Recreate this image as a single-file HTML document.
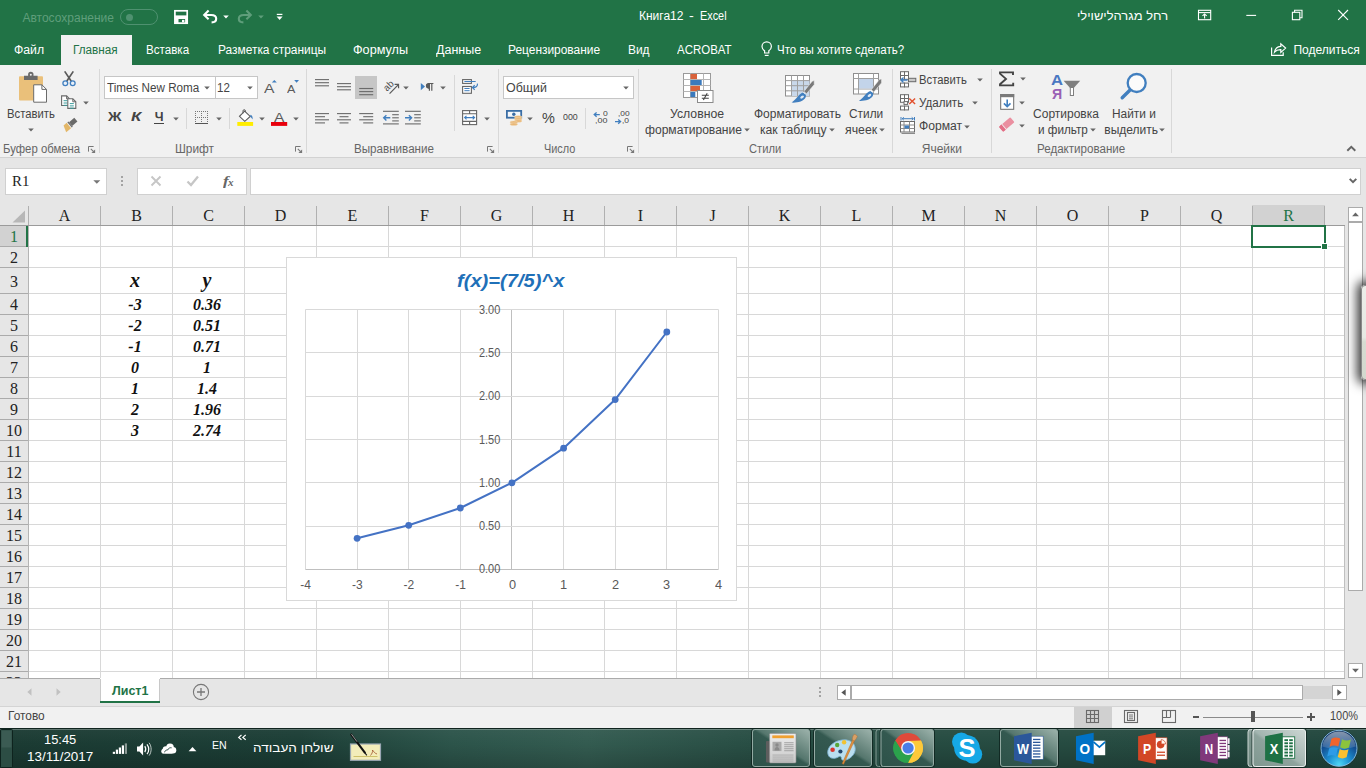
<!DOCTYPE html>
<html><head><meta charset="utf-8"><title>Excel</title>
<style>
html,body{margin:0;padding:0;background:#fff;}
body{width:1366px;height:768px;position:relative;overflow:hidden;}
.b{position:absolute;display:block;}
.t{position:absolute;white-space:nowrap;transform-origin:0 50%;display:block;}
.s{font-family:"Liberation Sans","DejaVu Sans",sans-serif;}
.r{font-family:"Liberation Serif","DejaVu Serif",serif;}
</style></head><body>
<div class="b" style="left:0px;top:0px;width:1366px;height:65px;background:#217346;"></div>
<div class="b" style="left:0px;top:65px;width:1366px;height:92px;background:#f1f1f1;"></div>
<div class="b" style="left:0px;top:157px;width:1366px;height:1px;background:#d2d2d2;"></div>
<div class="b" style="left:0px;top:158px;width:1366px;height:48px;background:#e6e6e6;"></div>
<span class="t s" style="left:22.46px;top:9.84px;font-size:12px;line-height:16px;color:#5f9e7b;">Автосохранение</span>
<div class="b" style="left:120px;top:9px;width:38px;height:16px;border:1px solid #4f9170;box-sizing:border-box;border-radius:8px;"></div>
<div class="b" style="left:125.5px;top:13.5px;width:7px;height:7px;background:#4f9170;border-radius:50%;"></div>
<span class="t s" style="left:638.96px;top:7.84px;font-size:12px;line-height:16px;color:#fff;">Книга12</span>
<span class="t s" style="left:689.46px;top:7.84px;font-size:12px;line-height:16px;color:#fff;transform:scaleX(1.1960);">-</span>
<span class="t s" style="left:699.86px;top:7.84px;font-size:12px;line-height:16px;color:#fff;transform:scaleX(0.9058);">Excel</span>
<span class="t s" style="left:1077.46px;top:7.84px;font-size:12px;line-height:16px;color:#fff;transform:scaleX(1.0770);">רחל מגרהלישוילי</span>
<div class="b" style="left:61px;top:35px;width:71px;height:30px;background:#f1f1f1;"></div>
<span class="t s" style="left:14.46px;top:41.84px;font-size:12px;line-height:16px;color:#fff;transform:scaleX(1.0196);">Файл</span>
<span class="t s" style="left:73.46px;top:41.84px;font-size:12px;line-height:16px;color:#217346;transform:scaleX(0.9760);">Главная</span>
<span class="t s" style="left:146.46px;top:41.84px;font-size:12px;line-height:16px;color:#fff;transform:scaleX(0.9659);">Вставка</span>
<span class="t s" style="left:217.96px;top:41.84px;font-size:12px;line-height:16px;color:#fff;transform:scaleX(0.9928);">Разметка страницы</span>
<span class="t s" style="left:353.46px;top:41.84px;font-size:12px;line-height:16px;color:#fff;transform:scaleX(1.0548);">Формулы</span>
<span class="t s" style="left:435.96px;top:41.84px;font-size:12px;line-height:16px;color:#fff;transform:scaleX(1.0398);">Данные</span>
<span class="t s" style="left:508.46px;top:41.84px;font-size:12px;line-height:16px;color:#fff;transform:scaleX(0.9937);">Рецензирование</span>
<span class="t s" style="left:628.46px;top:41.84px;font-size:12px;line-height:16px;color:#fff;transform:scaleX(0.9940);">Вид</span>
<span class="t s" style="left:677.46px;top:41.84px;font-size:12px;line-height:16px;color:#fff;transform:scaleX(0.9555);">ACROBAT</span>
<span class="t s" style="left:777.46px;top:41.84px;font-size:12px;line-height:16px;color:#fff;transform:scaleX(0.9579);">Что вы хотите сделать?</span>
<span class="t s" style="left:1293.46px;top:41.84px;font-size:12px;line-height:16px;color:#fff;">Поделиться</span>
<span class="t s" style="left:2.96px;top:140.84px;font-size:12px;line-height:16px;color:#666666;transform:scaleX(0.9465);">Буфер обмена</span>
<span class="t s" style="left:175.16px;top:140.84px;font-size:12px;line-height:16px;color:#666666;transform:scaleX(0.9873);">Шрифт</span>
<span class="t s" style="left:354.26px;top:140.84px;font-size:12px;line-height:16px;color:#666666;transform:scaleX(0.9683);">Выравнивание</span>
<span class="t s" style="left:544.16px;top:140.84px;font-size:12px;line-height:16px;color:#666666;transform:scaleX(0.9092);">Число</span>
<span class="t s" style="left:748.96px;top:140.84px;font-size:12px;line-height:16px;color:#666666;transform:scaleX(0.9308);">Стили</span>
<span class="t s" style="left:921.76px;top:140.84px;font-size:12px;line-height:16px;color:#666666;">Ячейки</span>
<span class="t s" style="left:1037.06px;top:140.84px;font-size:12px;line-height:16px;color:#666666;transform:scaleX(0.9646);">Редактирование</span>
<div class="b" style="left:99px;top:69px;width:1px;height:84px;background:#d8d8d8;"></div>
<div class="b" style="left:306px;top:69px;width:1px;height:84px;background:#d8d8d8;"></div>
<div class="b" style="left:498px;top:69px;width:1px;height:84px;background:#d8d8d8;"></div>
<div class="b" style="left:638px;top:69px;width:1px;height:84px;background:#d8d8d8;"></div>
<div class="b" style="left:892px;top:69px;width:1px;height:84px;background:#d8d8d8;"></div>
<div class="b" style="left:991px;top:69px;width:1px;height:84px;background:#d8d8d8;"></div>
<div class="b" style="left:1171px;top:69px;width:1px;height:84px;background:#d8d8d8;"></div>
<div class="b" style="left:454px;top:75px;width:1px;height:56px;background:#d8d8d8;"></div>
<div class="b" style="left:186px;top:108px;width:1px;height:21px;background:#d8d8d8;"></div>
<div class="b" style="left:229px;top:108px;width:1px;height:21px;background:#d8d8d8;"></div>
<div class="b" style="left:585px;top:108px;width:1px;height:21px;background:#d8d8d8;"></div>
<span class="t s" style="left:6.96px;top:105.84px;font-size:12px;line-height:16px;color:#444444;transform:scaleX(0.9413);">Вставить</span>
<span class="t s" style="left:670.46px;top:105.84px;font-size:12px;line-height:16px;color:#444444;transform:scaleX(1.0207);">Условное</span>
<span class="t s" style="left:644.86px;top:121.84px;font-size:12px;line-height:16px;color:#444444;transform:scaleX(1.0066);">форматирование</span>
<span class="t s" style="left:753.96px;top:105.84px;font-size:12px;line-height:16px;color:#444444;">Форматировать</span>
<span class="t s" style="left:760.46px;top:121.84px;font-size:12px;line-height:16px;color:#444444;transform:scaleX(1.0146);">как таблицу</span>
<span class="t s" style="left:848.96px;top:105.84px;font-size:12px;line-height:16px;color:#444444;transform:scaleX(0.9887);">Стили</span>
<span class="t s" style="left:845.46px;top:121.84px;font-size:12px;line-height:16px;color:#444444;transform:scaleX(1.0233);">ячеек</span>
<span class="t s" style="left:918.96px;top:71.84px;font-size:12px;line-height:16px;color:#444444;transform:scaleX(0.9393);">Вставить</span>
<span class="t s" style="left:918.96px;top:94.84px;font-size:12px;line-height:16px;color:#444444;transform:scaleX(0.9643);">Удалить</span>
<span class="t s" style="left:918.96px;top:117.84px;font-size:12px;line-height:16px;color:#444444;transform:scaleX(1.0129);">Формат</span>
<span class="t s" style="left:1033.06px;top:105.84px;font-size:12px;line-height:16px;color:#444444;">Сортировка</span>
<span class="t s" style="left:1037.96px;top:121.84px;font-size:12px;line-height:16px;color:#444444;transform:scaleX(0.9761);">и фильтр</span>
<span class="t s" style="left:1112.16px;top:105.84px;font-size:12px;line-height:16px;color:#444444;transform:scaleX(0.9910);">Найти и</span>
<span class="t s" style="left:1104.26px;top:121.84px;font-size:12px;line-height:16px;color:#444444;">выделить</span>
<div class="b" style="left:104px;top:76px;width:112px;height:23px;background:#fff;border:1px solid #c6c6c6;box-sizing:border-box;"></div>
<div class="b" style="left:215px;top:76px;width:43px;height:23px;background:#fff;border:1px solid #c6c6c6;box-sizing:border-box;"></div>
<span class="t s" style="left:107.24px;top:80.07px;font-size:12.5px;line-height:16px;color:#444444;transform:scaleX(0.9339);">Times New Roma</span>
<span class="t s" style="left:217.24px;top:80.07px;font-size:12.5px;line-height:16px;color:#444444;transform:scaleX(0.9224);">12</span>
<div class="b" style="left:503px;top:76px;width:131px;height:23px;background:#fff;border:1px solid #c6c6c6;box-sizing:border-box;"></div>
<span class="t s" style="left:506.04px;top:79.97px;font-size:12.5px;line-height:16px;color:#444444;transform:scaleX(0.9950);">Общий</span>
<div class="b" style="left:355px;top:76px;width:22px;height:23px;background:#c6c6c6;"></div>
<span class="t s" style="left:108.24px;top:109.37px;font-size:12.5px;line-height:16px;color:#444444;font-weight:bold;transform:scaleX(1.1971);">Ж</span>
<span class="t s" style="left:130.66px;top:109.37px;font-size:12.5px;line-height:16px;color:#444444;font-weight:bold;font-style:italic;transform:scaleX(1.3371);">К</span>
<span class="t s" style="left:154.74px;top:109.37px;font-size:12.5px;line-height:16px;color:#444444;font-weight:bold;">Ч</span>
<div class="b" style="left:154px;top:123px;width:10px;height:1.1px;background:#444444;"></div>
<span class="t s" style="left:542.12px;top:108.20px;font-size:15px;line-height:20px;color:#444444;transform:scaleX(0.9635);">%</span>
<span class="t s" style="left:562.58px;top:111.18px;font-size:9.3px;line-height:12px;color:#444444;transform:scaleX(0.9497);">000</span>
<span class="t s" style="left:263.92px;top:79.80px;font-size:13px;line-height:17px;color:#5a5a5a;transform:scaleX(1.2074);">A</span>
<span class="t s" style="left:286.83px;top:82.16px;font-size:10.5px;line-height:14px;color:#5a5a5a;transform:scaleX(1.1915);">A</span>
<span class="t s" style="left:273.92px;top:108.50px;font-size:13px;line-height:17px;color:#5a5a5a;transform:scaleX(1.1959);">A</span>
<span class="t s" style="left:1050.75px;top:70.78px;font-size:14.5px;line-height:19px;color:#4a78c2;font-weight:bold;transform:scaleX(1.1464);">А</span>
<span class="t s" style="left:1051.55px;top:84.88px;font-size:14.5px;line-height:19px;color:#9a5fb5;font-weight:bold;transform:scaleX(0.9792);">Я</span>
<span class="t s" style="left:602.67px;top:108.84px;font-size:7.4px;line-height:10px;color:#444;transform:scaleX(1.1580);">0</span>
<span class="t s" style="left:594.97px;top:116.44px;font-size:7.4px;line-height:10px;color:#444;transform:scaleX(1.2118);">,00</span>
<span class="t s" style="left:617.57px;top:108.84px;font-size:7.4px;line-height:10px;color:#444;transform:scaleX(1.1340);">,00</span>
<span class="t s" style="left:622.17px;top:116.44px;font-size:7.4px;line-height:10px;color:#444;transform:scaleX(1.1449);">,0</span>
<svg class="b" style="left:28.3px;top:127.5px;" width="6" height="4" viewBox="0 0 6 4"><path d="M0.2 0.5h5.6L3 3.6z" fill="#666"/></svg>
<svg class="b" style="left:82.7px;top:100.5px;" width="6" height="4" viewBox="0 0 6 4"><path d="M0.2 0.5h5.6L3 3.6z" fill="#666"/></svg>
<svg class="b" style="left:204px;top:85.5px;" width="6" height="4" viewBox="0 0 6 4"><path d="M0.2 0.5h5.6L3 3.6z" fill="#666"/></svg>
<svg class="b" style="left:247.3px;top:85.5px;" width="6" height="4" viewBox="0 0 6 4"><path d="M0.2 0.5h5.6L3 3.6z" fill="#666"/></svg>
<svg class="b" style="left:172.5px;top:116.5px;" width="6" height="4" viewBox="0 0 6 4"><path d="M0.2 0.5h5.6L3 3.6z" fill="#666"/></svg>
<svg class="b" style="left:215.5px;top:116.5px;" width="6" height="4" viewBox="0 0 6 4"><path d="M0.2 0.5h5.6L3 3.6z" fill="#666"/></svg>
<svg class="b" style="left:258.5px;top:116.5px;" width="6" height="4" viewBox="0 0 6 4"><path d="M0.2 0.5h5.6L3 3.6z" fill="#666"/></svg>
<svg class="b" style="left:292.5px;top:116.5px;" width="6" height="4" viewBox="0 0 6 4"><path d="M0.2 0.5h5.6L3 3.6z" fill="#666"/></svg>
<svg class="b" style="left:402.8px;top:85.5px;" width="6" height="4" viewBox="0 0 6 4"><path d="M0.2 0.5h5.6L3 3.6z" fill="#666"/></svg>
<svg class="b" style="left:440.3px;top:85.5px;" width="6" height="4" viewBox="0 0 6 4"><path d="M0.2 0.5h5.6L3 3.6z" fill="#666"/></svg>
<svg class="b" style="left:483.5px;top:116.5px;" width="6" height="4" viewBox="0 0 6 4"><path d="M0.2 0.5h5.6L3 3.6z" fill="#666"/></svg>
<svg class="b" style="left:623.3px;top:85.5px;" width="6" height="4" viewBox="0 0 6 4"><path d="M0.2 0.5h5.6L3 3.6z" fill="#666"/></svg>
<svg class="b" style="left:527.3px;top:116.5px;" width="6" height="4" viewBox="0 0 6 4"><path d="M0.2 0.5h5.6L3 3.6z" fill="#666"/></svg>
<svg class="b" style="left:743.5px;top:128px;" width="6" height="4" viewBox="0 0 6 4"><path d="M0.2 0.5h5.6L3 3.6z" fill="#666"/></svg>
<svg class="b" style="left:829.4px;top:128px;" width="6" height="4" viewBox="0 0 6 4"><path d="M0.2 0.5h5.6L3 3.6z" fill="#666"/></svg>
<svg class="b" style="left:879.1px;top:128px;" width="6" height="4" viewBox="0 0 6 4"><path d="M0.2 0.5h5.6L3 3.6z" fill="#666"/></svg>
<svg class="b" style="left:976.5px;top:78px;" width="6" height="4" viewBox="0 0 6 4"><path d="M0.2 0.5h5.6L3 3.6z" fill="#666"/></svg>
<svg class="b" style="left:972.3px;top:100.5px;" width="6" height="4" viewBox="0 0 6 4"><path d="M0.2 0.5h5.6L3 3.6z" fill="#666"/></svg>
<svg class="b" style="left:964px;top:124.5px;" width="6" height="4" viewBox="0 0 6 4"><path d="M0.2 0.5h5.6L3 3.6z" fill="#666"/></svg>
<svg class="b" style="left:1020.3px;top:77px;" width="6" height="4" viewBox="0 0 6 4"><path d="M0.2 0.5h5.6L3 3.6z" fill="#666"/></svg>
<svg class="b" style="left:1018.5px;top:100.5px;" width="6" height="4" viewBox="0 0 6 4"><path d="M0.2 0.5h5.6L3 3.6z" fill="#666"/></svg>
<svg class="b" style="left:1018.5px;top:123.5px;" width="6" height="4" viewBox="0 0 6 4"><path d="M0.2 0.5h5.6L3 3.6z" fill="#666"/></svg>
<svg class="b" style="left:1090.3px;top:128px;" width="6" height="4" viewBox="0 0 6 4"><path d="M0.2 0.5h5.6L3 3.6z" fill="#666"/></svg>
<svg class="b" style="left:1158.8px;top:128px;" width="6" height="4" viewBox="0 0 6 4"><path d="M0.2 0.5h5.6L3 3.6z" fill="#666"/></svg>
<svg class="b" style="left:222.9px;top:14.5px;" width="6" height="4" viewBox="0 0 6 4"><path d="M0.2 0.5h5.6L3 3.6z" fill="#fff"/></svg>
<svg class="b" style="left:257.6px;top:14.5px;" width="6" height="4" viewBox="0 0 6 4"><path d="M0.2 0.5h5.6L3 3.6z" fill="#5f9e7b"/></svg>
<svg class="b" style="left:88px;top:146px;" width="8" height="8" viewBox="0 0 8 8"><path d="M0.5 5.6V0.5H5.6" fill="none" stroke="#777" stroke-width="1"/><path d="M2.8 2.8L5.6 5.6" stroke="#777" stroke-width="1.1"/><path d="M7.1 3.4V7.1H3.4z" fill="#777"/></svg>
<svg class="b" style="left:295px;top:146px;" width="8" height="8" viewBox="0 0 8 8"><path d="M0.5 5.6V0.5H5.6" fill="none" stroke="#777" stroke-width="1"/><path d="M2.8 2.8L5.6 5.6" stroke="#777" stroke-width="1.1"/><path d="M7.1 3.4V7.1H3.4z" fill="#777"/></svg>
<svg class="b" style="left:487px;top:146px;" width="8" height="8" viewBox="0 0 8 8"><path d="M0.5 5.6V0.5H5.6" fill="none" stroke="#777" stroke-width="1"/><path d="M2.8 2.8L5.6 5.6" stroke="#777" stroke-width="1.1"/><path d="M7.1 3.4V7.1H3.4z" fill="#777"/></svg>
<svg class="b" style="left:627px;top:146px;" width="8" height="8" viewBox="0 0 8 8"><path d="M0.5 5.6V0.5H5.6" fill="none" stroke="#777" stroke-width="1"/><path d="M2.8 2.8L5.6 5.6" stroke="#777" stroke-width="1.1"/><path d="M7.1 3.4V7.1H3.4z" fill="#777"/></svg>
<svg class="b" style="left:0;top:0" width="1366" height="160" viewBox="0 0 1366 160"><rect x="174.9" y="10.8" width="12.3" height="12.4" fill="none" stroke="#fff" stroke-width="1.7"/><rect x="175" y="15.4" width="12" height="7.6" fill="#fff"/><rect x="178.5" y="19" width="6.6" height="3.3" fill="#217346"/><rect x="182" y="19.9" width="2.4" height="2.4" fill="#fff"/><g transform="translate(203,0)" fill="none" stroke="#fff" stroke-width="2.1"><path d="M5.6 10.6L1.2 15.0L5.6 19.2"/><path d="M1.6 15H8.2C11.8 15 13.2 16.9 13.2 18.8C13.2 21 11.2 22.4 8.6 22.4"/></g><g transform="translate(252,0) scale(-1,1)" fill="none" stroke="#5f9e7b" stroke-width="2.1"><path d="M5.6 10.6L1.2 15.0L5.6 19.2"/><path d="M1.6 15H8.2C11.8 15 13.2 16.9 13.2 18.8C13.2 21 11.2 22.4 8.6 22.4"/></g><rect x="276.8" y="13.8" width="5.6" height="1.2" fill="#fff"/><path d="M276.6 16.6h6l-3 3.4z" fill="#fff"/><g fill="none" stroke="#fff" stroke-width="1.2"><path d="M764.600 53v-2.200c-1.700-1.200-2.600-2.500-2.600-4.300a4.700 4.700 0 0 1 9.400 0c0 1.800-.9 3.100-2.600 4.300v2.200z"/><path d="M764.800 55.400h3.800"/></g><g fill="none" stroke="#fff" stroke-width="1.2"><path d="M1271.6 47.5v7.8h11.6v-3"/><path d="M1274.5 52.2c.6-3.6 3-5.6 6.3-5.8v-2.6l4.8 4.3l-4.8 4.3v-2.7c-2.6-.1-4.6.6-6.3 2.5z"/></g><g fill="none" stroke="#fff" stroke-width="1.1"><rect x="1198.5" y="10.3" width="12.2" height="9.4"/><path d="M1198.5 12.6h12.2"/><path d="M1204.6 18.4v-4.4M1202.5 15.9l2.1-2l2.1 2"/></g><path d="M1246.3 15.4h9.8" stroke="#fff" stroke-width="1.1"/><g fill="none" stroke="#fff" stroke-width="1.1"><rect x="1292.4" y="12.3" width="7.4" height="7.4"/><path d="M1294.6 12.3v-2h7.4v7.4h-2.2"/></g><path d="M1338.2 10l9.8 9.8M1348 10l-9.8 9.8" stroke="#fff" stroke-width="1.1" fill="none"/><rect x="19" y="76.2" width="24" height="24.4" rx="1" fill="#eac07a"/><path d="M24 80v-4.300h4.100v-1.200a2.700 2.700 0 0 1 5.400 0v1.200h4.100v4.300z" fill="#6a6a6a"/><circle cx="30.800" cy="74.700" r="1" fill="#f1f1f1"/><path d="M33.7 84.8h8.2l4.6 4.6v12.8h-12.8z" fill="#fff" stroke="#6a6a6a" stroke-width="1"/><path d="M41.9 84.8v4.6h4.6" fill="none" stroke="#6a6a6a" stroke-width="1"/><path d="M64.700 71.400l6.600 9.800M73.300 71.400l-6.600 9.800" stroke="#5a5a5a" stroke-width="1.700" fill="none"/><circle cx="65.300" cy="83.200" r="2.400" fill="#e9f0f8" stroke="#417fbf" stroke-width="1.300"/><circle cx="72.700" cy="83.200" r="2.400" fill="#e9f0f8" stroke="#417fbf" stroke-width="1.300"/><path d="M61.6 95.9h5l3 3v6.6h-8z" fill="#fff" stroke="#6a6a6a" stroke-width="1.1"/><path d="M66.6 95.9v3h3" fill="none" stroke="#6a6a6a" stroke-width="1"/><path d="M63.6 100.7h4" stroke="#3a9c9c" stroke-width="1"/><path d="M63.6 103.0h4" stroke="#3a9c9c" stroke-width="1"/><path d="M63.6 105.3h4" stroke="#3a9c9c" stroke-width="1"/><path d="M67.8 98.8h5l3 3v6.6h-8z" fill="#fff" stroke="#6a6a6a" stroke-width="1.1"/><path d="M72.8 98.8v3h3" fill="none" stroke="#6a6a6a" stroke-width="1"/><path d="M69.8 103.6h4" stroke="#3a9c9c" stroke-width="1"/><path d="M69.8 105.89999999999999h4" stroke="#3a9c9c" stroke-width="1"/><path d="M69.8 108.19999999999999h4" stroke="#3a9c9c" stroke-width="1"/><g transform="translate(69.700,124.800) rotate(-40) scale(0.780)"><rect x="1.5" y="-3.1" width="8.8" height="6.2" fill="#6a6a6a"/><rect x="-0.3" y="-4.4" width="1.8" height="8.8" fill="#6a6a6a"/><path d="M-1.4 -4.4h-5.2l-3 8.8h8.2z" fill="#e3b768"/></g><path d="M271.8 82.6l2.5-2.7l2.5 2.7z" fill="#417fbf"/><path d="M294.2 80l2.4 2.7l2.4-2.7z" fill="#417fbf"/><rect x="195" y="111" width="1" height="1" fill="#777"/><rect x="195" y="117" width="1" height="1" fill="#777"/><rect x="197" y="111" width="1" height="1" fill="#777"/><rect x="197" y="117" width="1" height="1" fill="#777"/><rect x="199" y="111" width="1" height="1" fill="#777"/><rect x="199" y="117" width="1" height="1" fill="#777"/><rect x="201" y="111" width="1" height="1" fill="#777"/><rect x="201" y="117" width="1" height="1" fill="#777"/><rect x="203" y="111" width="1" height="1" fill="#777"/><rect x="203" y="117" width="1" height="1" fill="#777"/><rect x="205" y="111" width="1" height="1" fill="#777"/><rect x="205" y="117" width="1" height="1" fill="#777"/><rect x="207" y="111" width="1" height="1" fill="#777"/><rect x="207" y="117" width="1" height="1" fill="#777"/><rect x="195" y="111" width="1" height="1" fill="#777"/><rect x="201" y="111" width="1" height="1" fill="#777"/><rect x="207" y="111" width="1" height="1" fill="#777"/><rect x="195" y="113" width="1" height="1" fill="#777"/><rect x="201" y="113" width="1" height="1" fill="#777"/><rect x="207" y="113" width="1" height="1" fill="#777"/><rect x="195" y="115" width="1" height="1" fill="#777"/><rect x="201" y="115" width="1" height="1" fill="#777"/><rect x="207" y="115" width="1" height="1" fill="#777"/><rect x="195" y="117" width="1" height="1" fill="#777"/><rect x="201" y="117" width="1" height="1" fill="#777"/><rect x="207" y="117" width="1" height="1" fill="#777"/><rect x="195" y="119" width="1" height="1" fill="#777"/><rect x="201" y="119" width="1" height="1" fill="#777"/><rect x="207" y="119" width="1" height="1" fill="#777"/><rect x="195" y="121" width="1" height="1" fill="#777"/><rect x="201" y="121" width="1" height="1" fill="#777"/><rect x="207" y="121" width="1" height="1" fill="#777"/><rect x="195" y="123" width="13" height="1" fill="#555"/><rect x="237.3" y="122" width="15.8" height="3.9" fill="#ffed00"/><path d="M244.6 111.2l5.6 5.2l-5.4 4.9l-5.3-5z" fill="#fff" stroke="#5a5a5a" stroke-width="1.1"/><path d="M243 113.3v-2.4a1.2 1.2 0 0 1 2.4 0v1" fill="none" stroke="#5a5a5a" stroke-width="1"/><path d="M250.3 114.8c1.8.5 2.6 2.2 2.3 4.6c-1-.9-1.600-2.200-2.300-2.6z" fill="#417fbf"/><rect x="271" y="122" width="16.2" height="3.9" fill="#e8000d"/><rect x="315" y="79.05" width="14" height="1.1" fill="#6a6a6a"/><rect x="315" y="82.15" width="14" height="1.1" fill="#6a6a6a"/><rect x="315" y="85.25" width="14" height="1.1" fill="#6a6a6a"/><rect x="337" y="83.05" width="14" height="1.1" fill="#6a6a6a"/><rect x="337" y="86.15" width="14" height="1.1" fill="#6a6a6a"/><rect x="337" y="89.25" width="14" height="1.1" fill="#6a6a6a"/><rect x="359.2" y="87.95" width="14.0" height="1.1" fill="#6a6a6a"/><rect x="359.2" y="91.05" width="14.0" height="1.1" fill="#6a6a6a"/><rect x="359.2" y="94.15" width="14.0" height="1.1" fill="#6a6a6a"/><path d="M389.600 93.600l8.800-9" stroke="#5a5a5a" stroke-width="1.200"/><path d="M394.600 84.300l3.900.100l.1 3.900" fill="none" stroke="#5a5a5a" stroke-width="1.200"/><text transform="translate(388.400,85.700) rotate(-45)" text-anchor="middle" font-family="Liberation Sans, sans-serif" font-size="9.500" fill="#4a4a4a" y="3.200">ab</text><path d="M420.8 83v7.2l4.200-3.600z" fill="#417fbf"/><path d="M429.4 83.4v7.400M431.8 83.400v7.400M433.400 83.500h-5.200a2.400 2.400 0 0 0 0 4.600h1.200" fill="none" stroke="#5a5a5a" stroke-width="1.200"/><path d="M428.2 83.5a2.300 2.300 0 0 0 0 4.600h1.200v-4.600z" fill="#5a5a5a"/><rect x="315" y="113.05" width="14" height="1.1" fill="#6a6a6a"/><rect x="315" y="116.15" width="10" height="1.1" fill="#6a6a6a"/><rect x="315" y="119.25" width="14" height="1.1" fill="#6a6a6a"/><rect x="315" y="122.35000000000001" width="10" height="1.1" fill="#6a6a6a"/><rect x="337" y="113.05" width="14" height="1.1" fill="#6a6a6a"/><rect x="339.5" y="116.15" width="9.0" height="1.1" fill="#6a6a6a"/><rect x="337" y="119.25" width="14" height="1.1" fill="#6a6a6a"/><rect x="339.5" y="122.35000000000001" width="9.0" height="1.1" fill="#6a6a6a"/><rect x="359.2" y="113.05" width="14.0" height="1.1" fill="#6a6a6a"/><rect x="363.2" y="116.15" width="10.0" height="1.1" fill="#6a6a6a"/><rect x="359.2" y="119.25" width="14.0" height="1.1" fill="#6a6a6a"/><rect x="363.2" y="122.35000000000001" width="10.0" height="1.1" fill="#6a6a6a"/><rect x="383" y="110.75" width="15.800000000000011" height="1.1" fill="#6a6a6a"/><rect x="383" y="123.35000000000001" width="15.800000000000011" height="1.1" fill="#6a6a6a"/><rect x="392.2" y="114.15" width="6.600000000000023" height="1.1" fill="#6a6a6a"/><rect x="392.2" y="117.25" width="6.600000000000023" height="1.1" fill="#6a6a6a"/><rect x="392.2" y="120.35000000000001" width="6.600000000000023" height="1.1" fill="#6a6a6a"/><path d="M390.3 117.800h-6.500M386.4 115.200l-2.700 2.600l2.700 2.600" fill="none" stroke="#417fbf" stroke-width="1.400"/><rect x="405" y="110.75" width="15.800000000000011" height="1.1" fill="#6a6a6a"/><rect x="405" y="123.35000000000001" width="15.800000000000011" height="1.1" fill="#6a6a6a"/><rect x="414.2" y="114.15" width="6.600000000000023" height="1.1" fill="#6a6a6a"/><rect x="414.2" y="117.25" width="6.600000000000023" height="1.1" fill="#6a6a6a"/><rect x="414.2" y="120.35000000000001" width="6.600000000000023" height="1.1" fill="#6a6a6a"/><path d="M405 117.800h6.500M408.9 115.200l2.700 2.600l-2.700 2.600" fill="none" stroke="#417fbf" stroke-width="1.400"/><g fill="#fff" stroke="#666" stroke-width="1.100"><rect x="462.600" y="79.600" width="8.800" height="3.800"/><rect x="462.600" y="86.500" width="8.800" height="6.800"/></g><path d="M464.400 81.500h11.300M464.400 88.500h5.200M464.400 90.700h5.200" stroke="#417fbf" stroke-width="1" fill="none"/><path d="M477.400 83.700c.5 2.200-1.200 3.800-4.800 3.800M474.700 85.300l-2.300 2.200l2.300 2.200" fill="none" stroke="#417fbf" stroke-width="1.200"/><g fill="#fff" stroke="#666" stroke-width="1.100"><rect x="462.600" y="110.600" width="14" height="14"/><path d="M462.600 113.800h14M462.600 121.400h14M469.600 110.600v3.200M469.600 121.400v3.200"/></g><path d="M464.600 117.600h10M466.500 115.800l-1.900 1.800l1.900 1.800M472.700 115.800l1.900 1.800l-1.900 1.800" fill="none" stroke="#417fbf" stroke-width="1.100"/><rect x="506.900" y="110.900" width="14.300" height="6.800" fill="#f4f7fb" stroke="#3b6ea5" stroke-width="1.800"/><circle cx="513.800" cy="114.300" r="1.700" fill="#3b6ea5"/><ellipse cx="518.2" cy="117" rx="3.800" ry="1.300" fill="#e8b574" stroke="#f3dcb8" stroke-width="0.500"/><ellipse cx="518.2" cy="119" rx="3.800" ry="1.300" fill="#e8b574" stroke="#f3dcb8" stroke-width="0.500"/><ellipse cx="518.2" cy="121" rx="3.800" ry="1.300" fill="#e8b574" stroke="#f3dcb8" stroke-width="0.500"/><ellipse cx="513.8" cy="122.2" rx="3.800" ry="1.300" fill="#e8b574" stroke="#f3dcb8" stroke-width="0.500"/><ellipse cx="513.8" cy="124.2" rx="3.800" ry="1.300" fill="#e8b574" stroke="#f3dcb8" stroke-width="0.500"/><path d="M599.800 114.600h-5.600M596.600 112.400l-2.400 2.200l2.400 2.200" fill="none" stroke="#417fbf" stroke-width="1.300"/><path d="M615 121.600h5.600M618.200 119.400l2.400 2.200l-2.400 2.200" fill="none" stroke="#417fbf" stroke-width="1.300"/><rect x="683.500" y="73.500" width="27" height="24" fill="#fff" stroke="#9a9a9a" stroke-width="1"/><path d="M683.500 79.5h27" stroke="#b5b5b5" stroke-width="1"/><path d="M683.500 85.5h27" stroke="#b5b5b5" stroke-width="1"/><path d="M683.500 91.5h27" stroke="#b5b5b5" stroke-width="1"/><path d="M690.5 73.500v24" stroke="#b5b5b5" stroke-width="1"/><path d="M703.5 73.500v24" stroke="#b5b5b5" stroke-width="1"/><rect x="690.500" y="74" width="6.500" height="5" fill="#d9623b"/><rect x="690.500" y="80" width="11.200" height="5" fill="#3b7abd"/><rect x="690.500" y="86" width="9.500" height="5" fill="#d9623b"/><rect x="690.500" y="92" width="4.800" height="5" fill="#3b7abd"/><rect x="697.500" y="90.500" width="15.500" height="12" fill="#fff" stroke="#8a8a8a" stroke-width="1"/><path d="M701.800 95.200h7M701.800 98.200h7M707.200 93.300l-3.800 6.800" stroke="#444" stroke-width="1.100" fill="none"/><rect x="785.500" y="75.500" width="24" height="20.500" fill="#fff" stroke="#8f8f8f" stroke-width="1"/><rect x="791.500" y="80.500" width="18" height="15.500" fill="#c9d8ea"/><path d="M785.500 80.6h24" stroke="#9f9f9f" stroke-width="1"/><path d="M785.500 85.7h24" stroke="#9f9f9f" stroke-width="1"/><path d="M785.500 90.8h24" stroke="#9f9f9f" stroke-width="1"/><path d="M791.5 75.500v20.500" stroke="#9f9f9f" stroke-width="1"/><path d="M797.5 75.500v20.500" stroke="#9f9f9f" stroke-width="1"/><path d="M803.5 75.500v20.500" stroke="#9f9f9f" stroke-width="1"/><g transform="translate(804.8,92.8)"><path d="M-0.800 -1.400L7.400 -11.600L9.400 -12.200V-8.200L1.700 1z" fill="#7a7a7a" stroke="#f1f1f1" stroke-width="0.500"/><path d="M-1.600 -0.200C-5.800 0.700 -7.800 6.200 -13.200 9.800C-7.800 10.200 -1.300 8.700 0.800 4.700C1.500 2.700 1 1.500 0.200 1z" fill="#417fbf"/><ellipse cx="-2.700" cy="4.300" rx="2.100" ry="1.200" fill="#dfe9f5" transform="rotate(-35 -2.700 4.300)"/><path d="M-1.900 -0.700L0.700 1.300" stroke="#f1f1f1" stroke-width="0.900"/></g><rect x="853.500" y="73.500" width="25" height="20.500" fill="#fff" stroke="#8f8f8f" stroke-width="1"/><path d="M853.500 78.500h25M853.500 89h25M858.500 73.500v20.500M873.500 73.500v20.500" stroke="#9f9f9f" stroke-width="1" fill="none"/><rect x="859" y="79" width="14" height="9.500" fill="#c3d4ea"/><g transform="translate(872.1,91.1)"><path d="M-0.800 -1.400L7.400 -11.600L9.400 -12.200V-8.200L1.700 1z" fill="#7a7a7a" stroke="#f1f1f1" stroke-width="0.500"/><path d="M-1.600 -0.200C-5.800 0.700 -7.800 6.200 -13.200 9.800C-7.800 10.200 -1.300 8.700 0.800 4.700C1.500 2.700 1 1.500 0.200 1z" fill="#417fbf"/><ellipse cx="-2.700" cy="4.300" rx="2.100" ry="1.200" fill="#dfe9f5" transform="rotate(-35 -2.700 4.300)"/><path d="M-1.900 -0.700L0.700 1.300" stroke="#f1f1f1" stroke-width="0.900"/></g><rect x="900.5" y="71.7" width="4" height="3.800" fill="#fff" stroke="#6a6a6a" stroke-width="1"/><rect x="904.5" y="71.7" width="4" height="3.800" fill="#fff" stroke="#6a6a6a" stroke-width="1"/><rect x="900.5" y="75.5" width="4" height="3.800" fill="#fff" stroke="#6a6a6a" stroke-width="1"/><rect x="904.5" y="75.5" width="4" height="3.800" fill="#fff" stroke="#6a6a6a" stroke-width="1"/><rect x="900.5" y="83.1" width="4" height="3.800" fill="#fff" stroke="#6a6a6a" stroke-width="1"/><rect x="904.5" y="83.1" width="4" height="3.800" fill="#fff" stroke="#6a6a6a" stroke-width="1"/><rect x="908.500" y="78.300" width="7.300" height="3.400" fill="#c8c8c8" stroke="#6a6a6a" stroke-width="1"/><path d="M907.500 80h-6.500M903.500 77.600l-2.600 2.400l2.600 2.400" fill="none" stroke="#417fbf" stroke-width="1.300"/><rect x="900.5" y="94.7" width="4" height="3.800" fill="#fff" stroke="#6a6a6a" stroke-width="1"/><rect x="904.5" y="94.7" width="4" height="3.800" fill="#fff" stroke="#6a6a6a" stroke-width="1"/><rect x="900.5" y="98.5" width="4" height="3.800" fill="#fff" stroke="#6a6a6a" stroke-width="1"/><rect x="904.5" y="98.5" width="4" height="3.800" fill="#fff" stroke="#6a6a6a" stroke-width="1"/><rect x="900.5" y="106.1" width="4" height="3.800" fill="#fff" stroke="#6a6a6a" stroke-width="1"/><rect x="904.5" y="106.1" width="4" height="3.800" fill="#fff" stroke="#6a6a6a" stroke-width="1"/><rect x="904" y="101.600" width="3.600" height="2.800" fill="#fff" stroke="#6a6a6a" stroke-width="1"/><path d="M909.300 98.500l5.800 5.600M915.100 98.500l-5.800 5.600" stroke="#e2502e" stroke-width="1.400" fill="none"/><rect x="900.500" y="121.500" width="14" height="10.500" fill="#fff" stroke="#6a6a6a" stroke-width="1"/><path d="M900.500 125h14M900.500 128.500h14M904 121.500v10.500M909.500 121.500v10.500" stroke="#8a8a8a" stroke-width="1" fill="none"/><rect x="904.500" y="125.500" width="4.500" height="3" fill="#417fbf"/><path d="M901 117v3.500M914.500 117v3.500M902 118.700h11.500M903.800 117.300l-1.600 1.400l1.600 1.400M911.700 117.300l1.600 1.400l-1.600 1.400" fill="none" stroke="#417fbf" stroke-width="1"/><path d="M901.500 133.500h13.500" stroke="#8a8a8a" stroke-width="1"/><path d="M1013 74.900v-2.500h-13v1.200l6 5.300l-6 5.300v1.200h13.200v-2.700" fill="none" stroke="#444" stroke-width="1.900"/><rect x="1000.700" y="94.500" width="13" height="14.800" fill="#fff" stroke="#6a6a6a" stroke-width="1"/><rect x="1000.200" y="94" width="14" height="3.200" fill="#7a7a7a"/><path d="M1007.200 99.500v7M1003.900 103.400l3.300 3.200l3.300-3.200" fill="none" stroke="#417fbf" stroke-width="1.600"/><g transform="translate(1006.700,124.500) rotate(-40)"><rect x="-7.500" y="-3.300" width="15" height="6.600" rx="1" fill="#ea8fa0"/><rect x="-7.500" y="-3.300" width="4" height="6.600" rx="1" fill="#e36f86"/><rect x="-4" y="-3.300" width="0.900" height="6.600" fill="#f1f1f1"/></g><path d="M1063.600 80.800h16.600l-6.500 7.200h-3.600z" fill="#7f7f7f"/><rect x="1070.300" y="87.500" width="3.200" height="8" fill="#fff" stroke="#7f7f7f" stroke-width="1"/><circle cx="1136.700" cy="83" r="9" fill="#fbfbfb" stroke="#417fbf" stroke-width="2.300"/><path d="M1129.800 90.300l-7.600 7.400" stroke="#417fbf" stroke-width="3.400" stroke-linecap="round"/><path d="M1347.300 150.800l4-3.900l4 3.900" fill="none" stroke="#666" stroke-width="2"/></svg>
<div class="b" style="left:5px;top:168px;width:102px;height:27px;background:#fff;border:1px solid #d0d0d0;box-sizing:border-box;"></div>
<span class="t r" style="left:11.64px;top:171.55px;font-size:14.67px;line-height:19px;color:#222;transform:scaleX(1.0175);">R1</span>
<svg class="b" style="left:93px;top:179.5px;" width="8" height="4" viewBox="0 0 8 4"><path d="M0.3 0.3h7L3.8 3.8z" fill="#777"/></svg>
<div class="b" style="left:121px;top:176px;width:2px;height:2px;background:#a3a3a3;"></div>
<div class="b" style="left:121px;top:180px;width:2px;height:2px;background:#a3a3a3;"></div>
<div class="b" style="left:121px;top:184px;width:2px;height:2px;background:#a3a3a3;"></div>
<div class="b" style="left:137px;top:168px;width:110px;height:27px;background:#fff;border:1px solid #d0d0d0;box-sizing:border-box;"></div>
<svg class="b" style="left:150px;top:175px;" width="12" height="12" viewBox="0 0 12 12"><path d="M1.5 1.5l9 9M10.5 1.5l-9 9" stroke="#c6c6c6" stroke-width="1.9" fill="none"/></svg>
<svg class="b" style="left:186px;top:175px;" width="14" height="12" viewBox="0 0 14 12"><path d="M1.5 6.5l3.5 3.5l7-8.5" stroke="#c6c6c6" stroke-width="2.3" fill="none"/></svg>
<span class="t r" style="left:222.94px;top:171.74px;font-size:13.5px;line-height:18px;color:#666;font-weight:bold;font-style:italic;transform:scaleX(1.2742);">f</span>
<span class="t r" style="left:228.34px;top:177.09px;font-size:9.5px;line-height:12px;color:#666;font-weight:bold;font-style:italic;transform:scaleX(1.1606);">x</span>
<div class="b" style="left:250px;top:168px;width:1111px;height:27px;background:#fff;border:1px solid #d0d0d0;box-sizing:border-box;"></div>
<svg class="b" style="left:1349px;top:178px;" width="8" height="6" viewBox="0 0 8 6"><path d="M0.7 0.9L4 4.2L7.3 0.9" stroke="#666" stroke-width="2" fill="none"/></svg>
<div class="b" style="left:0px;top:205px;width:1345px;height:21px;background:#e6e6e6;"></div>
<div class="b" style="left:0px;top:226px;width:28px;height:452px;background:#e6e6e6;"></div>
<div class="b" style="left:28px;top:226px;width:1316px;height:452px;background:#fff;"></div>
<svg class="b" style="left:12px;top:210px;" width="14" height="13" viewBox="0 0 14 13"><path d="M13 0.5V12.5H0.5z" fill="#b7b7b7"/></svg>
<div class="b" style="left:1252px;top:205px;width:73px;height:20px;background:#d2d2d2;"></div>
<span class="t r" style="left:58.72px;top:205.10px;font-size:16px;line-height:21px;color:#222;">A</span>
<div class="b" style="left:100px;top:206px;width:1px;height:20px;background:#b0b0b0;"></div>
<div class="b" style="left:100px;top:226px;width:1px;height:452px;background:#d8d8d8;"></div>
<span class="t r" style="left:131.16px;top:205.10px;font-size:16px;line-height:21px;color:#222;">B</span>
<div class="b" style="left:172px;top:206px;width:1px;height:20px;background:#b0b0b0;"></div>
<div class="b" style="left:172px;top:226px;width:1px;height:452px;background:#d8d8d8;"></div>
<span class="t r" style="left:203.16px;top:205.10px;font-size:16px;line-height:21px;color:#222;">C</span>
<div class="b" style="left:244px;top:206px;width:1px;height:20px;background:#b0b0b0;"></div>
<div class="b" style="left:244px;top:226px;width:1px;height:452px;background:#d8d8d8;"></div>
<span class="t r" style="left:274.72px;top:205.10px;font-size:16px;line-height:21px;color:#222;">D</span>
<div class="b" style="left:316px;top:206px;width:1px;height:20px;background:#b0b0b0;"></div>
<div class="b" style="left:316px;top:226px;width:1px;height:452px;background:#d8d8d8;"></div>
<span class="t r" style="left:347.61px;top:205.10px;font-size:16px;line-height:21px;color:#222;">E</span>
<div class="b" style="left:388px;top:206px;width:1px;height:20px;background:#b0b0b0;"></div>
<div class="b" style="left:388px;top:226px;width:1px;height:452px;background:#d8d8d8;"></div>
<span class="t r" style="left:420.05px;top:205.10px;font-size:16px;line-height:21px;color:#222;">F</span>
<div class="b" style="left:460px;top:206px;width:1px;height:20px;background:#b0b0b0;"></div>
<div class="b" style="left:460px;top:226px;width:1px;height:452px;background:#d8d8d8;"></div>
<span class="t r" style="left:490.72px;top:205.10px;font-size:16px;line-height:21px;color:#222;">G</span>
<div class="b" style="left:532px;top:206px;width:1px;height:20px;background:#b0b0b0;"></div>
<div class="b" style="left:532px;top:226px;width:1px;height:452px;background:#d8d8d8;"></div>
<span class="t r" style="left:562.72px;top:205.10px;font-size:16px;line-height:21px;color:#222;">H</span>
<div class="b" style="left:604px;top:206px;width:1px;height:20px;background:#b0b0b0;"></div>
<div class="b" style="left:604px;top:226px;width:1px;height:452px;background:#d8d8d8;"></div>
<span class="t r" style="left:637.84px;top:205.10px;font-size:16px;line-height:21px;color:#222;">I</span>
<div class="b" style="left:676px;top:206px;width:1px;height:20px;background:#b0b0b0;"></div>
<div class="b" style="left:676px;top:226px;width:1px;height:452px;background:#d8d8d8;"></div>
<span class="t r" style="left:709.39px;top:205.10px;font-size:16px;line-height:21px;color:#222;">J</span>
<div class="b" style="left:748px;top:206px;width:1px;height:20px;background:#b0b0b0;"></div>
<div class="b" style="left:748px;top:226px;width:1px;height:452px;background:#d8d8d8;"></div>
<span class="t r" style="left:778.72px;top:205.10px;font-size:16px;line-height:21px;color:#222;">K</span>
<div class="b" style="left:820px;top:206px;width:1px;height:20px;background:#b0b0b0;"></div>
<div class="b" style="left:820px;top:226px;width:1px;height:452px;background:#d8d8d8;"></div>
<span class="t r" style="left:851.61px;top:205.10px;font-size:16px;line-height:21px;color:#222;">L</span>
<div class="b" style="left:892px;top:206px;width:1px;height:20px;background:#b0b0b0;"></div>
<div class="b" style="left:892px;top:226px;width:1px;height:452px;background:#d8d8d8;"></div>
<span class="t r" style="left:921.39px;top:205.10px;font-size:16px;line-height:21px;color:#222;">M</span>
<div class="b" style="left:964px;top:206px;width:1px;height:20px;background:#b0b0b0;"></div>
<div class="b" style="left:964px;top:226px;width:1px;height:452px;background:#d8d8d8;"></div>
<span class="t r" style="left:994.72px;top:205.10px;font-size:16px;line-height:21px;color:#222;">N</span>
<div class="b" style="left:1036px;top:206px;width:1px;height:20px;background:#b0b0b0;"></div>
<div class="b" style="left:1036px;top:226px;width:1px;height:452px;background:#d8d8d8;"></div>
<span class="t r" style="left:1066.72px;top:205.10px;font-size:16px;line-height:21px;color:#222;">O</span>
<div class="b" style="left:1108px;top:206px;width:1px;height:20px;background:#b0b0b0;"></div>
<div class="b" style="left:1108px;top:226px;width:1px;height:452px;background:#d8d8d8;"></div>
<span class="t r" style="left:1140.05px;top:205.10px;font-size:16px;line-height:21px;color:#222;">P</span>
<div class="b" style="left:1180px;top:206px;width:1px;height:20px;background:#b0b0b0;"></div>
<div class="b" style="left:1180px;top:226px;width:1px;height:452px;background:#d8d8d8;"></div>
<span class="t r" style="left:1210.72px;top:205.10px;font-size:16px;line-height:21px;color:#222;">Q</span>
<div class="b" style="left:1252px;top:206px;width:1px;height:20px;background:#b0b0b0;"></div>
<div class="b" style="left:1252px;top:226px;width:1px;height:452px;background:#d8d8d8;"></div>
<span class="t r" style="left:1283.16px;top:205.10px;font-size:16px;line-height:21px;color:#217346;">R</span>
<div class="b" style="left:1324px;top:206px;width:1px;height:20px;background:#b0b0b0;"></div>
<div class="b" style="left:1324px;top:226px;width:1px;height:452px;background:#d8d8d8;"></div>
<div class="b" style="left:28px;top:206px;width:1px;height:20px;background:#b0b0b0;"></div>
<div class="b" style="left:0px;top:225px;width:1345px;height:1px;background:#9b9b9b;"></div>
<div class="b" style="left:28px;top:226px;width:1px;height:452px;background:#b4b4b4;"></div>
<div class="b" style="left:1344px;top:226px;width:1px;height:452px;background:#c0c0c0;"></div>
<div class="b" style="left:0px;top:226px;width:28px;height:21px;background:#d2d2d2;"></div>
<div class="b" style="left:0px;top:246px;width:28px;height:1px;background:#ababab;"></div>
<div class="b" style="left:29px;top:246px;width:1315px;height:1px;background:#d8d8d8;"></div>
<span class="t r" style="left:10.00px;top:226.10px;font-size:16px;line-height:21px;color:#217346;">1</span>
<div class="b" style="left:0px;top:267px;width:28px;height:1px;background:#ababab;"></div>
<div class="b" style="left:29px;top:267px;width:1315px;height:1px;background:#d8d8d8;"></div>
<span class="t r" style="left:10.00px;top:247.10px;font-size:16px;line-height:21px;color:#222;">2</span>
<div class="b" style="left:0px;top:293px;width:28px;height:1px;background:#ababab;"></div>
<div class="b" style="left:29px;top:293px;width:1315px;height:1px;background:#d8d8d8;"></div>
<span class="t r" style="left:10.00px;top:271.10px;font-size:16px;line-height:21px;color:#222;">3</span>
<div class="b" style="left:0px;top:314px;width:28px;height:1px;background:#ababab;"></div>
<div class="b" style="left:29px;top:314px;width:1315px;height:1px;background:#d8d8d8;"></div>
<span class="t r" style="left:10.00px;top:294.10px;font-size:16px;line-height:21px;color:#222;">4</span>
<div class="b" style="left:0px;top:335px;width:28px;height:1px;background:#ababab;"></div>
<div class="b" style="left:29px;top:335px;width:1315px;height:1px;background:#d8d8d8;"></div>
<span class="t r" style="left:10.00px;top:315.10px;font-size:16px;line-height:21px;color:#222;">5</span>
<div class="b" style="left:0px;top:356px;width:28px;height:1px;background:#ababab;"></div>
<div class="b" style="left:29px;top:356px;width:1315px;height:1px;background:#d8d8d8;"></div>
<span class="t r" style="left:10.00px;top:336.10px;font-size:16px;line-height:21px;color:#222;">6</span>
<div class="b" style="left:0px;top:377px;width:28px;height:1px;background:#ababab;"></div>
<div class="b" style="left:29px;top:377px;width:1315px;height:1px;background:#d8d8d8;"></div>
<span class="t r" style="left:10.00px;top:357.10px;font-size:16px;line-height:21px;color:#222;">7</span>
<div class="b" style="left:0px;top:398px;width:28px;height:1px;background:#ababab;"></div>
<div class="b" style="left:29px;top:398px;width:1315px;height:1px;background:#d8d8d8;"></div>
<span class="t r" style="left:10.00px;top:378.10px;font-size:16px;line-height:21px;color:#222;">8</span>
<div class="b" style="left:0px;top:419px;width:28px;height:1px;background:#ababab;"></div>
<div class="b" style="left:29px;top:419px;width:1315px;height:1px;background:#d8d8d8;"></div>
<span class="t r" style="left:10.00px;top:399.10px;font-size:16px;line-height:21px;color:#222;">9</span>
<div class="b" style="left:0px;top:440px;width:28px;height:1px;background:#ababab;"></div>
<div class="b" style="left:29px;top:440px;width:1315px;height:1px;background:#d8d8d8;"></div>
<span class="t r" style="left:6.00px;top:420.10px;font-size:16px;line-height:21px;color:#222;">10</span>
<div class="b" style="left:0px;top:461px;width:28px;height:1px;background:#ababab;"></div>
<div class="b" style="left:29px;top:461px;width:1315px;height:1px;background:#d8d8d8;"></div>
<span class="t r" style="left:6.30px;top:441.10px;font-size:16px;line-height:21px;color:#222;">11</span>
<div class="b" style="left:0px;top:482px;width:28px;height:1px;background:#ababab;"></div>
<div class="b" style="left:29px;top:482px;width:1315px;height:1px;background:#d8d8d8;"></div>
<span class="t r" style="left:6.00px;top:462.10px;font-size:16px;line-height:21px;color:#222;">12</span>
<div class="b" style="left:0px;top:503px;width:28px;height:1px;background:#ababab;"></div>
<div class="b" style="left:29px;top:503px;width:1315px;height:1px;background:#d8d8d8;"></div>
<span class="t r" style="left:6.00px;top:483.10px;font-size:16px;line-height:21px;color:#222;">13</span>
<div class="b" style="left:0px;top:524px;width:28px;height:1px;background:#ababab;"></div>
<div class="b" style="left:29px;top:524px;width:1315px;height:1px;background:#d8d8d8;"></div>
<span class="t r" style="left:6.00px;top:504.10px;font-size:16px;line-height:21px;color:#222;">14</span>
<div class="b" style="left:0px;top:545px;width:28px;height:1px;background:#ababab;"></div>
<div class="b" style="left:29px;top:545px;width:1315px;height:1px;background:#d8d8d8;"></div>
<span class="t r" style="left:6.00px;top:525.10px;font-size:16px;line-height:21px;color:#222;">15</span>
<div class="b" style="left:0px;top:566px;width:28px;height:1px;background:#ababab;"></div>
<div class="b" style="left:29px;top:566px;width:1315px;height:1px;background:#d8d8d8;"></div>
<span class="t r" style="left:6.00px;top:546.10px;font-size:16px;line-height:21px;color:#222;">16</span>
<div class="b" style="left:0px;top:587px;width:28px;height:1px;background:#ababab;"></div>
<div class="b" style="left:29px;top:587px;width:1315px;height:1px;background:#d8d8d8;"></div>
<span class="t r" style="left:6.00px;top:567.10px;font-size:16px;line-height:21px;color:#222;">17</span>
<div class="b" style="left:0px;top:608px;width:28px;height:1px;background:#ababab;"></div>
<div class="b" style="left:29px;top:608px;width:1315px;height:1px;background:#d8d8d8;"></div>
<span class="t r" style="left:6.00px;top:588.10px;font-size:16px;line-height:21px;color:#222;">18</span>
<div class="b" style="left:0px;top:629px;width:28px;height:1px;background:#ababab;"></div>
<div class="b" style="left:29px;top:629px;width:1315px;height:1px;background:#d8d8d8;"></div>
<span class="t r" style="left:6.00px;top:609.10px;font-size:16px;line-height:21px;color:#222;">19</span>
<div class="b" style="left:0px;top:650px;width:28px;height:1px;background:#ababab;"></div>
<div class="b" style="left:29px;top:650px;width:1315px;height:1px;background:#d8d8d8;"></div>
<span class="t r" style="left:6.00px;top:630.10px;font-size:16px;line-height:21px;color:#222;">20</span>
<div class="b" style="left:0px;top:671px;width:28px;height:1px;background:#ababab;"></div>
<div class="b" style="left:29px;top:671px;width:1315px;height:1px;background:#d8d8d8;"></div>
<span class="t r" style="left:6.00px;top:651.10px;font-size:16px;line-height:21px;color:#222;">21</span>
<span class="t r" style="left:6.00px;top:672.10px;font-size:16px;line-height:21px;color:#222;">22</span>
<div class="b" style="left:26px;top:226px;width:2px;height:21px;background:#217346;"></div>
<span class="t r" style="left:130.00px;top:267.25px;font-size:20px;line-height:26px;color:#111;font-weight:bold;font-style:italic;">x</span>
<span class="t r" style="left:202.56px;top:267.25px;font-size:20px;line-height:26px;color:#111;font-weight:bold;font-style:italic;">y</span>
<span class="t r" style="left:128.34px;top:294.10px;font-size:16px;line-height:21px;color:#111;font-weight:bold;font-style:italic;">-3</span>
<span class="t r" style="left:193.00px;top:294.10px;font-size:16px;line-height:21px;color:#111;font-weight:bold;font-style:italic;">0.36</span>
<span class="t r" style="left:128.34px;top:315.10px;font-size:16px;line-height:21px;color:#111;font-weight:bold;font-style:italic;">-2</span>
<span class="t r" style="left:193.00px;top:315.10px;font-size:16px;line-height:21px;color:#111;font-weight:bold;font-style:italic;">0.51</span>
<span class="t r" style="left:128.34px;top:336.10px;font-size:16px;line-height:21px;color:#111;font-weight:bold;font-style:italic;">-1</span>
<span class="t r" style="left:193.00px;top:336.10px;font-size:16px;line-height:21px;color:#111;font-weight:bold;font-style:italic;">0.71</span>
<span class="t r" style="left:131.00px;top:357.10px;font-size:16px;line-height:21px;color:#111;font-weight:bold;font-style:italic;">0</span>
<span class="t r" style="left:203.00px;top:357.10px;font-size:16px;line-height:21px;color:#111;font-weight:bold;font-style:italic;">1</span>
<span class="t r" style="left:131.00px;top:378.10px;font-size:16px;line-height:21px;color:#111;font-weight:bold;font-style:italic;">1</span>
<span class="t r" style="left:197.00px;top:378.10px;font-size:16px;line-height:21px;color:#111;font-weight:bold;font-style:italic;">1.4</span>
<span class="t r" style="left:131.00px;top:399.10px;font-size:16px;line-height:21px;color:#111;font-weight:bold;font-style:italic;">2</span>
<span class="t r" style="left:193.00px;top:399.10px;font-size:16px;line-height:21px;color:#111;font-weight:bold;font-style:italic;">1.96</span>
<span class="t r" style="left:131.00px;top:420.10px;font-size:16px;line-height:21px;color:#111;font-weight:bold;font-style:italic;">3</span>
<span class="t r" style="left:193.00px;top:420.10px;font-size:16px;line-height:21px;color:#111;font-weight:bold;font-style:italic;">2.74</span>
<div class="b" style="left:1251px;top:225px;width:75px;height:23px;border:2px solid #217346;box-sizing:border-box;"></div>
<div class="b" style="left:1321px;top:243px;width:7px;height:7px;background:#217346;border:1px solid #fff;box-sizing:border-box;"></div>
<svg class="b" style="left:286px;top:257px;" width="451" height="344" viewBox="0 0 451 344"><rect x="0.5" y="0.5" width="450" height="343" fill="#fff" stroke="#d9d9d9"/><line x1="19.5" y1="52.5" x2="19.5" y2="312.5" stroke="#d9d9d9" stroke-width="1"/><line x1="71.5" y1="52.5" x2="71.5" y2="312.5" stroke="#d9d9d9" stroke-width="1"/><line x1="122.5" y1="52.5" x2="122.5" y2="312.5" stroke="#d9d9d9" stroke-width="1"/><line x1="174.5" y1="52.5" x2="174.5" y2="312.5" stroke="#d9d9d9" stroke-width="1"/><line x1="225.5" y1="52.5" x2="225.5" y2="312.5" stroke="#bfbfbf" stroke-width="1"/><line x1="277.5" y1="52.5" x2="277.5" y2="312.5" stroke="#d9d9d9" stroke-width="1"/><line x1="329.5" y1="52.5" x2="329.5" y2="312.5" stroke="#d9d9d9" stroke-width="1"/><line x1="380.5" y1="52.5" x2="380.5" y2="312.5" stroke="#d9d9d9" stroke-width="1"/><line x1="432.5" y1="52.5" x2="432.5" y2="312.5" stroke="#d9d9d9" stroke-width="1"/><line x1="19.5" y1="312.5" x2="432.4" y2="312.5" stroke="#bfbfbf" stroke-width="1"/><line x1="19.5" y1="269.5" x2="432.4" y2="269.5" stroke="#d9d9d9" stroke-width="1"/><line x1="19.5" y1="225.5" x2="432.4" y2="225.5" stroke="#d9d9d9" stroke-width="1"/><line x1="19.5" y1="182.5" x2="432.4" y2="182.5" stroke="#d9d9d9" stroke-width="1"/><line x1="19.5" y1="139.5" x2="432.4" y2="139.5" stroke="#d9d9d9" stroke-width="1"/><line x1="19.5" y1="95.5" x2="432.4" y2="95.5" stroke="#d9d9d9" stroke-width="1"/><line x1="19.5" y1="52.5" x2="432.4" y2="52.5" stroke="#d9d9d9" stroke-width="1"/><polyline fill="none" stroke="#4472c4" stroke-width="2" stroke-linejoin="round" points="71.1,281.3 122.7,268.3 174.3,251.0 225.9,225.8 277.6,191.2 329.2,142.6 380.8,75.0"/><circle cx="71.1" cy="281.3" r="3.4" fill="#4472c4"/><circle cx="122.7" cy="268.3" r="3.4" fill="#4472c4"/><circle cx="174.3" cy="251.0" r="3.4" fill="#4472c4"/><circle cx="225.9" cy="225.8" r="3.4" fill="#4472c4"/><circle cx="277.6" cy="191.2" r="3.4" fill="#4472c4"/><circle cx="329.2" cy="142.6" r="3.4" fill="#4472c4"/><circle cx="380.8" cy="75.0" r="3.4" fill="#4472c4"/></svg>
<span class="t s" style="left:456.50px;top:269.09px;font-size:18.5px;line-height:24px;color:#1f70b8;font-weight:bold;font-style:italic;transform:scaleX(1.0890);">f(x)=(7/5)^x</span>
<span class="t s" style="left:479.46px;top:561.34px;font-size:12px;line-height:16px;color:#595959;transform:scaleX(0.9111);">0.00</span>
<span class="t s" style="left:479.46px;top:518.09px;font-size:12px;line-height:16px;color:#595959;transform:scaleX(0.9111);">0.50</span>
<span class="t s" style="left:479.46px;top:474.84px;font-size:12px;line-height:16px;color:#595959;transform:scaleX(0.9111);">1.00</span>
<span class="t s" style="left:479.46px;top:431.59px;font-size:12px;line-height:16px;color:#595959;transform:scaleX(0.9111);">1.50</span>
<span class="t s" style="left:479.46px;top:388.34px;font-size:12px;line-height:16px;color:#595959;transform:scaleX(0.9111);">2.00</span>
<span class="t s" style="left:479.46px;top:345.09px;font-size:12px;line-height:16px;color:#595959;transform:scaleX(0.9111);">2.50</span>
<span class="t s" style="left:479.46px;top:301.84px;font-size:12px;line-height:16px;color:#595959;transform:scaleX(0.9111);">3.00</span>
<span class="t s" style="left:300.36px;top:576.84px;font-size:12px;line-height:16px;color:#595959;">-4</span>
<span class="t s" style="left:351.96px;top:576.84px;font-size:12px;line-height:16px;color:#595959;">-3</span>
<span class="t s" style="left:403.56px;top:576.84px;font-size:12px;line-height:16px;color:#595959;">-2</span>
<span class="t s" style="left:455.16px;top:576.84px;font-size:12px;line-height:16px;color:#595959;">-1</span>
<span class="t s" style="left:508.56px;top:576.84px;font-size:12px;line-height:16px;color:#595959;transform:scaleX(1.0618);">0</span>
<span class="t s" style="left:560.16px;top:576.84px;font-size:12px;line-height:16px;color:#595959;transform:scaleX(1.0618);">1</span>
<span class="t s" style="left:611.76px;top:576.84px;font-size:12px;line-height:16px;color:#595959;transform:scaleX(1.0618);">2</span>
<span class="t s" style="left:663.36px;top:576.84px;font-size:12px;line-height:16px;color:#595959;transform:scaleX(1.0618);">3</span>
<span class="t s" style="left:714.96px;top:576.84px;font-size:12px;line-height:16px;color:#595959;transform:scaleX(1.0618);">4</span>
<div class="b" style="left:1345px;top:205px;width:21px;height:473px;background:#e6e6e6;"></div>
<div class="b" style="left:1348px;top:207px;width:15px;height:15px;background:#fff;border:1px solid #ababab;box-sizing:border-box;"></div>
<svg class="b" style="left:1352px;top:211.5px;" width="7" height="5" viewBox="0 0 7 5"><path d="M3.5 0.6L6.9 4.2H0.1z" fill="#666"/></svg>
<div class="b" style="left:1348px;top:222px;width:15px;height:369px;background:#fff;border:1px solid #ababab;box-sizing:border-box;"></div>
<div class="b" style="left:1348px;top:663px;width:15px;height:15px;background:#fff;border:1px solid #ababab;box-sizing:border-box;"></div>
<svg class="b" style="left:1352px;top:668px;" width="7" height="5" viewBox="0 0 7 5"><path d="M3.5 4.4L6.9 0.8H0.1z" fill="#666"/></svg>
<div class="b" style="left:1361px;top:285px;width:12px;height:95px;background:#e9ebe6;border:1px solid #8a8a8a;box-sizing:border-box;border-radius:4px;box-shadow:0 0 11px 4px rgba(0,0,0,.78);background:linear-gradient(180deg,#eceee9 0,#e6e9e3 55%,#d6dbd1 60%,#d3d8ce 100%);"></div>
<div class="b" style="left:0px;top:678px;width:1366px;height:28px;background:#e6e6e6;"></div>
<div class="b" style="left:0px;top:678px;width:1345px;height:1px;background:#ababab;"></div>
<div class="b" style="left:100px;top:678px;width:60px;height:25px;background:#fff;"></div>
<div class="b" style="left:100px;top:701px;width:60px;height:2px;background:#217346;"></div>
<div class="b" style="left:100px;top:679px;width:1px;height:22px;background:#c8c8c8;"></div>
<div class="b" style="left:159px;top:679px;width:1px;height:22px;background:#c8c8c8;"></div>
<span class="t s" style="left:111.94px;top:683.27px;font-size:12.5px;line-height:16px;color:#217346;font-weight:bold;">Лист1</span>
<svg class="b" style="left:27px;top:688px;" width="5" height="8" viewBox="0 0 5 8"><path d="M4.5 0.3V7.7L0.3 4z" fill="#c1c1c1"/></svg>
<svg class="b" style="left:55.5px;top:688px;" width="5" height="8" viewBox="0 0 5 8"><path d="M0.5 0.3V7.7L4.7 4z" fill="#c1c1c1"/></svg>
<svg class="b" style="left:192px;top:683px;" width="18" height="18" viewBox="0 0 18 18"><circle cx="9" cy="9" r="7.6" fill="none" stroke="#777" stroke-width="1.1"/><path d="M9 5v8M5 9h8" stroke="#777" stroke-width="1.3"/></svg>
<div class="b" style="left:819px;top:687px;width:2px;height:2px;background:#a3a3a3;"></div>
<div class="b" style="left:819px;top:691px;width:2px;height:2px;background:#a3a3a3;"></div>
<div class="b" style="left:819px;top:695px;width:2px;height:2px;background:#a3a3a3;"></div>
<div class="b" style="left:837px;top:685px;width:14px;height:15px;background:#fff;border:1px solid #ababab;box-sizing:border-box;"></div>
<svg class="b" style="left:841px;top:689px;" width="5" height="7" viewBox="0 0 5 7"><path d="M4.7 0.2V6.8L0.3 3.5z" fill="#555"/></svg>
<div class="b" style="left:851px;top:685px;width:452px;height:15px;background:#fff;border:1px solid #ababab;box-sizing:border-box;"></div>
<div class="b" style="left:1303px;top:686px;width:29px;height:13px;background:#d4d4d4;"></div>
<div class="b" style="left:1332px;top:685px;width:15px;height:15px;background:#fff;border:1px solid #ababab;box-sizing:border-box;"></div>
<svg class="b" style="left:1337px;top:689px;" width="5" height="7" viewBox="0 0 5 7"><path d="M0.3 0.2V6.8L4.7 3.5z" fill="#555"/></svg>
<div class="b" style="left:0px;top:706px;width:1366px;height:22px;background:#f1f1f1;"></div>
<div class="b" style="left:0px;top:706px;width:1366px;height:1px;background:#d4d4d4;"></div>
<span class="t s" style="left:8.16px;top:707.54px;font-size:12px;line-height:16px;color:#444444;transform:scaleX(0.9899);">Готово</span>
<div class="b" style="left:1074px;top:707px;width:38px;height:21px;background:#d0d0d0;"></div>
<span class="t s" style="left:1330.06px;top:707.84px;font-size:12px;line-height:16px;color:#444444;transform:scaleX(0.9116);">100%</span>
<div class="b" style="left:1203px;top:717px;width:100px;height:1px;background:#8a8a8a;"></div>
<div class="b" style="left:1251px;top:711px;width:3.5px;height:11px;background:#555;"></div>
<div class="b" style="left:1193px;top:716px;width:6px;height:2px;background:#555;"></div>
<div class="b" style="left:1307px;top:716px;width:8px;height:2px;background:#555;"></div>
<div class="b" style="left:1310px;top:713px;width:2px;height:8px;background:#555;"></div>
<div class="b" style="left:0px;top:728px;width:1366px;height:40px;background:linear-gradient(90deg,#1b3b33 0,#1c3e36 22%,#2c544a 33%,#335b50 43%,#2b5147 52%,#254b41 58%,#264b41 80%,#21463d 100%);"></div>
<div class="b" style="left:0px;top:728px;width:1366px;height:40px;background:linear-gradient(180deg,rgba(255,255,255,.04) 0,rgba(0,0,0,0) 40%,rgba(0,0,0,.18) 100%);"></div>
<div class="b" style="left:0px;top:728px;width:1366px;height:1px;background:#10241f;"></div>
<div class="b" style="left:0px;top:729px;width:1366px;height:1px;background:rgba(255,255,255,.28);"></div>
<span class="t s" style="left:44.26px;top:732.44px;font-size:12px;line-height:16px;color:#fff;transform:scaleX(1.0749);">15:45</span>
<span class="t s" style="left:26.86px;top:749.44px;font-size:12px;line-height:16px;color:#fff;transform:scaleX(1.1202);">13/11/2017</span>
<span class="t s" style="left:212.28px;top:738.12px;font-size:11.5px;line-height:15px;color:#fff;transform:scaleX(0.9223);">EN</span>
<span class="t s" style="left:253.46px;top:739.84px;font-size:12px;line-height:16px;color:#fff;transform:scaleX(1.1329);">שולחן העבודה</span>
<svg class="b" style="left:0;top:700px" width="1366" height="68" viewBox="0 700 1366 68"><defs>
<linearGradient id="tbtn" x1="1" y1="0" x2="0" y2="1"><stop offset="0" stop-color="#9db3ac"/><stop offset="0.45" stop-color="#55766d"/><stop offset="0.5" stop-color="#345950"/><stop offset="1" stop-color="#2d5249"/></linearGradient>
<linearGradient id="tact" x1="1" y1="0" x2="0" y2="1"><stop offset="0" stop-color="#cdd7d4"/><stop offset="0.5" stop-color="#a3b5b0"/><stop offset="0.55" stop-color="#8ea39d"/><stop offset="1" stop-color="#7f978f"/></linearGradient>
<radialGradient id="orb" cx="0.5" cy="0.95" r="0.9"><stop offset="0" stop-color="#4fd6f5"/><stop offset="0.35" stop-color="#1c8fd0"/><stop offset="0.7" stop-color="#134f93"/><stop offset="1" stop-color="#0e2f5e"/></radialGradient>
<linearGradient id="orbhl" x1="0" y1="0" x2="0" y2="1"><stop offset="0" stop-color="#fff" stop-opacity="0.5"/><stop offset="1" stop-color="#fff" stop-opacity="0.12"/></linearGradient>
<linearGradient id="paper" x1="0" y1="0" x2="0" y2="1"><stop offset="0" stop-color="#ececec"/><stop offset="1" stop-color="#c9c9c9"/></linearGradient>
</defs><g fill="none" stroke="#6a6a6a" stroke-width="1.1"><rect x="1086.500" y="710.500" width="12" height="12"/><path d="M1090.500 710.500v12M1094.500 710.500v12M1086.500 714.500h12M1086.500 718.500h12"/><rect x="1124.500" y="710.500" width="13" height="12"/><rect x="1127.500" y="712.500" width="7" height="8"/><path d="M1129 715h4M1129 716.900h4M1129 718.800h4" stroke-width="0.9"/><rect x="1162.500" y="710.500" width="13" height="12"/><path d="M1166.500 710.500v7M1170.500 710.500v7M1162.500 717.500h8"/></g><rect x="751.5" y="728.500" width="59" height="39" rx="3" fill="none" stroke="#0e231e" stroke-width="1" opacity="0.8"/><rect x="752.5" y="729.500" width="57" height="37" rx="2.500" fill="url(#tbtn)" stroke="#93aaa3" stroke-width="1"/><rect x="813.5" y="728.500" width="59" height="39" rx="3" fill="none" stroke="#0e231e" stroke-width="1" opacity="0.8"/><rect x="814.5" y="729.500" width="57" height="37" rx="2.500" fill="url(#tbtn)" stroke="#93aaa3" stroke-width="1"/><rect x="876.0" y="729.500" width="53.5" height="37" rx="2.500" fill="url(#tbtn)" stroke="#93aaa3" stroke-width="1" opacity="0.85"/><rect x="880.0" y="728.500" width="54.5" height="39" rx="3" fill="none" stroke="#0e231e" stroke-width="1" opacity="0.8"/><rect x="881.0" y="729.500" width="52.5" height="37" rx="2.500" fill="url(#tbtn)" stroke="#93aaa3" stroke-width="1"/><rect x="999.5" y="728.500" width="59" height="39" rx="3" fill="none" stroke="#0e231e" stroke-width="1" opacity="0.8"/><rect x="1000.5" y="729.500" width="57" height="37" rx="2.500" fill="url(#tbtn)" stroke="#93aaa3" stroke-width="1"/><rect x="1248.0" y="729.500" width="53.5" height="37" rx="2.500" fill="url(#tact)" stroke="#e9efed" stroke-width="1" opacity="0.85"/><rect x="1252.0" y="728.500" width="54.5" height="39" rx="3" fill="none" stroke="#0e231e" stroke-width="1" opacity="0.8"/><rect x="1253.0" y="729.500" width="52.5" height="37" rx="2.500" fill="url(#tact)" stroke="#e9efed" stroke-width="1"/><rect x="0.500" y="729.500" width="12" height="38" rx="1" fill="#2c4d44" stroke="#0e231e" stroke-width="1"/><rect x="1.500" y="730.500" width="10" height="17" fill="#4a6a62" opacity="0.5"/><rect x="766" y="741" width="6" height="21.500" rx="0.800" fill="#5e5e5e"/><rect x="769.600" y="733.400" width="26.400" height="29.500" rx="0.800" fill="url(#paper)" stroke="#8d8d8d" stroke-width="0.600"/><rect x="772.300" y="735.400" width="21.500" height="2.800" fill="#f0a030"/><rect x="772.500" y="741.800" width="9" height="9.300" fill="#a9a9a9"/><path d="M774.500 750.500c0-3 1.400-3.600 2.500-3.600s2.500.600 2.500 3.600z" fill="#8a8a8a"/><circle cx="777" cy="745" r="1.700" fill="#8a8a8a"/><rect x="784.200" y="742.3" width="9.400" height="0.900" fill="#9c9c9c"/><rect x="784.200" y="744.3" width="9.400" height="0.900" fill="#9c9c9c"/><rect x="784.200" y="746.3" width="9.400" height="0.900" fill="#9c9c9c"/><rect x="784.200" y="748.3" width="9.400" height="0.900" fill="#9c9c9c"/><rect x="784.200" y="750.3" width="9.400" height="0.900" fill="#9c9c9c"/><rect x="772.500" y="754.6" width="21" height="0.900" fill="#aaa"/><rect x="772.500" y="756.6" width="21" height="0.900" fill="#aaa"/><rect x="772.500" y="758.6" width="21" height="0.900" fill="#aaa"/><rect x="772.500" y="760.6" width="21" height="0.900" fill="#aaa"/><g transform="rotate(-18 841.300 750.600)"><path d="M827.500 750.600c0-6 6.200-10.200 14-10.200s14 4.200 14 10.200c0 6.200-6 10.400-13 10.400c-3 0-3.800-1.500-3.400-3.300c.4-1.700-.6-2.500-2.600-2c-4.200 1.100-9-.9-9-5.100z" fill="#b9def0" stroke="#7fb4d2" stroke-width="0.800"/></g><circle cx="832.600" cy="749.800" r="2.300" fill="#d9362f"/><circle cx="837.200" cy="745" r="2.200" fill="#57a639"/><circle cx="844.100" cy="742.200" r="2.200" fill="#f2c230"/><circle cx="840.400" cy="751.500" r="2.100" fill="#23466e"/><path d="M842.200 763.600L852.600 739.800l1.900.800L843.600 764.200z" fill="#e0913f" stroke="#b46a25" stroke-width="0.500"/><path d="M852.400 740.200c-.3-2.200.300-4.300 1.800-5.900c1.700.200 2.800 1.200 3.100 2.300c-.6 1.700-1.600 3.200-3 4.400z" fill="#d9a066" stroke="#a9703a" stroke-width="0.500"/><path d="M908.1 748L895.28 740.60A14.8 14.8 0 0 1 920.92 740.60z" fill="#e04a3a"/><path d="M908.1 748L920.92 740.60A14.8 14.8 0 0 1 908.10 762.80z" fill="#fdc93a"/><path d="M908.1 748L908.10 762.80A14.8 14.8 0 0 1 895.28 740.60z" fill="#2ba24c"/><path d="M895.28 740.60L902.04 751.50L908.10 741.00L920.92 740.60A14.8 14.8 0 0 0 895.28 740.60z" fill="#e04a3a"/><path d="M920.92 740.60L908.10 741.00L914.16 751.50L908.10 762.80A14.8 14.8 0 0 0 920.92 740.60z" fill="#fdc93a"/><path d="M908.10 762.80L914.16 751.50L902.04 751.50L895.28 740.60A14.8 14.8 0 0 0 908.10 762.80z" fill="#2ba24c"/><circle cx="908.1" cy="748" r="7" fill="#f3f6fa"/><circle cx="908.1" cy="748" r="5.600" fill="#4a7de8"/><g fill="#16a8e6"><circle cx="967" cy="748" r="12.800"/><circle cx="961.300" cy="741.800" r="9.300"/><circle cx="972.900" cy="754.300" r="9.300"/></g><text x="967" y="757.200" text-anchor="middle" font-family="Liberation Sans, sans-serif" font-weight="bold" font-size="25.500" fill="#fff">S</text><rect x="1030" y="736.200" width="13.200" height="23.100" fill="#fff" stroke="#2b579a" stroke-width="0.600"/><rect x="1033" y="738.8" width="7.400" height="1.300" fill="#2b579a"/><rect x="1033" y="741.7" width="7.400" height="1.300" fill="#2b579a"/><rect x="1033" y="744.6" width="7.400" height="1.300" fill="#2b579a"/><rect x="1033" y="747.5" width="7.400" height="1.300" fill="#2b579a"/><rect x="1033" y="750.4" width="7.400" height="1.300" fill="#2b579a"/><rect x="1033" y="753.3" width="7.400" height="1.300" fill="#2b579a"/><rect x="1033" y="756.2" width="7.400" height="1.300" fill="#2b579a"/><path d="M1014 736.200L1031.7 732.700V764L1014 760.300z" fill="#2b579a"/><text x="1022.9" y="753.500" text-anchor="middle" font-family="Liberation Sans, sans-serif" font-weight="bold" font-size="15.500" fill="#fff" textLength='12' lengthAdjust=spacingAndGlyphs>W</text><rect x="1092" y="740.700" width="13.200" height="14.500" fill="#fff"/><path d="M1093.500 741.800l5.900 5.300l5.800-5.300" fill="none" stroke="#0072c6" stroke-width="1.700"/><path d="M1076 736.200L1093.7 732.700V764L1076 760.300z" fill="#0072c6"/><text x="1084.9" y="753.500" text-anchor="middle" font-family="Liberation Sans, sans-serif" font-weight="bold" font-size="15.500" fill="#fff" textLength='10.6' lengthAdjust=spacingAndGlyphs>O</text><rect x="1154" y="737.800" width="13" height="21.500" fill="#fffaf7" stroke="#d24726" stroke-width="0.600"/><circle cx="1160.600" cy="744.600" r="3.800" fill="#d24726"/><path d="M1161.200 744v-4.400a4.400 4.400 0 0 1 4.400 4.400z" fill="#fff5ee" stroke="#d24726" stroke-width="0.700"/><rect x="1157" y="751.600" width="8" height="1.300" fill="#d24726"/><rect x="1157" y="754.600" width="8" height="1.300" fill="#d24726"/><path d="M1138.1 736.200L1155.8 732.700V764L1138.1 760.300z" fill="#d24726"/><text x="1147.0" y="753.500" text-anchor="middle" font-family="Liberation Sans, sans-serif" font-weight="bold" font-size="15.500" fill="#fff" textLength='8.2' lengthAdjust=spacingAndGlyphs>P</text><rect x="1216" y="736.800" width="11.600" height="22" fill="#fff" stroke="#80397b" stroke-width="0.600"/><rect x="1227.600" y="738.300" width="2" height="5.600" fill="#f4e9f3"/><rect x="1227.600" y="745" width="2" height="5.600" fill="#f4e9f3"/><rect x="1227.600" y="751.700" width="2" height="5.600" fill="#f4e9f3"/><rect x="1219.500" y="739.8" width="6.500" height="1.300" fill="#80397b"/><rect x="1219.500" y="742.8" width="6.500" height="1.300" fill="#80397b"/><rect x="1219.500" y="745.8" width="6.500" height="1.300" fill="#80397b"/><rect x="1219.500" y="748.8" width="6.500" height="1.300" fill="#80397b"/><rect x="1219.500" y="751.8" width="6.500" height="1.300" fill="#80397b"/><rect x="1219.500" y="754.8" width="6.500" height="1.300" fill="#80397b"/><path d="M1200.1 736.200L1217.8 732.700V764L1200.1 760.300z" fill="#80397b"/><text x="1209.0" y="753.500" text-anchor="middle" font-family="Liberation Sans, sans-serif" font-weight="bold" font-size="15.500" fill="#fff" textLength='8.4' lengthAdjust=spacingAndGlyphs>N</text><rect x="1281.500" y="736.800" width="13.200" height="21.500" fill="#fff" stroke="#1e7145" stroke-width="0.900"/><rect x="1284.400" y="739.2" width="3.600" height="1.900" fill="#1e7145"/><rect x="1289.200" y="739.2" width="3.600" height="1.900" fill="#1e7145"/><rect x="1284.400" y="742.3" width="3.600" height="1.900" fill="#1e7145"/><rect x="1289.200" y="742.3" width="3.600" height="1.900" fill="#1e7145"/><rect x="1284.400" y="745.4" width="3.600" height="1.900" fill="#1e7145"/><rect x="1289.200" y="745.4" width="3.600" height="1.900" fill="#1e7145"/><rect x="1284.400" y="748.5" width="3.600" height="1.900" fill="#1e7145"/><rect x="1289.200" y="748.5" width="3.600" height="1.900" fill="#1e7145"/><rect x="1284.400" y="751.6" width="3.600" height="1.900" fill="#1e7145"/><rect x="1289.200" y="751.6" width="3.600" height="1.900" fill="#1e7145"/><rect x="1284.400" y="754.7" width="3.600" height="1.900" fill="#1e7145"/><rect x="1289.200" y="754.7" width="3.600" height="1.900" fill="#1e7145"/><path d="M1265.1 736.200L1282.8 732.700V764L1265.1 760.300z" fill="#1e7145"/><text x="1274.0" y="753.500" text-anchor="middle" font-family="Liberation Sans, sans-serif" font-weight="bold" font-size="15.500" fill="#fff" textLength='8.6' lengthAdjust=spacingAndGlyphs>X</text><circle cx="1339" cy="748.300" r="18.800" fill="#0b2036" opacity="0.55"/><circle cx="1339" cy="748.300" r="18" fill="url(#orb)" stroke="#8fc5e8" stroke-width="0.900"/><path d="M1322.300 746.500a16.800 16.800 0 0 1 33.400 0c-9 3.400-24.400 3.400-33.400 0z" fill="url(#orbhl)"/><g transform="translate(1340,747.800) scale(1.120) translate(-1338.600,-747.600)"><path d="M1331 739.500c2.600-1.600 5.200-1.500 7.800-.200l-1.700 7.200c-2.500-1.300-5.100-1.400-7.800.100z" fill="#f0642c"/><path d="M1340.400 740c2.600 1.500 5.200 1.600 7.900.200l-1.700 7.200c-2.700 1.400-5.300 1.300-7.900-.200z" fill="#8cc43c"/><path d="M1328.900 748.200c2.600-1.600 5.200-1.500 7.800-.200l-1.700 7.200c-2.500-1.300-5.100-1.400-7.800.100z" fill="#2e9be6"/><path d="M1338.300 748.700c2.600 1.500 5.200 1.600 7.900.200l-1.700 7.200c-2.700 1.400-5.300 1.300-7.900-.200z" fill="#fbc02e"/></g><rect x="112.8" y="751.8" width="2.200" height="2.1" fill="#fff"/><rect x="115.8" y="749.6" width="2.200" height="4.3" fill="#fff"/><rect x="118.8" y="747.5" width="2.200" height="6.4" fill="#fff"/><rect x="121.8" y="745.4" width="2.200" height="8.5" fill="#fff"/><rect x="124.8" y="743.4" width="2.200" height="10.5" fill="#8c9a96"/><path d="M137 746.600h2.400l3.700-4v13l-3.700-4h-2.400z" fill="#fff"/><path d="M144.800 746.200c1.100 1.700 1.100 4.300 0 6M147 744.300c2.100 2.900 2.100 7 0 9.800" fill="none" stroke="#fff" stroke-width="1.200"/><path d="M149.100 742.800c2.700 3.700 2.700 9 0 12.800" fill="none" stroke="#cfd8d5" stroke-width="0.900"/><g fill="#fff"><circle cx="170" cy="747.200" r="3.800"/><circle cx="165.800" cy="749.300" r="3.100"/><circle cx="173" cy="750.200" r="3.300"/><circle cx="163.800" cy="751.200" r="2.500"/><rect x="163.800" y="749.500" width="9.500" height="4.200" rx="2"/></g><path d="M164.600 752.300c.4-1.700 1.600-2.500 3-2.300c.8-1.800 2.300-2.500 4-2.200" fill="none" stroke="#1c3d35" stroke-width="0.900"/><path d="M188.600 751.200l3.900-4.200l3.900 4.200z" fill="#fff"/><path d="M241.500 735l-2.800 2.400l2.800 2.400M245.700 735l-2.800 2.400l2.800 2.400" fill="none" stroke="#fff" stroke-width="1.200"/><rect x="350.500" y="744" width="30" height="16.300" fill="#f3edba" stroke="#9aa7b3" stroke-width="1.200"/><path d="M353.500 756.500h24" stroke="#c9bc62" stroke-width="0.900"/><path d="M370.500 755.500c1.200-1.500 2.500-3.500 2-5.500c1 1.500 2.500 3.500 4.500 4" fill="none" stroke="#a0522d" stroke-width="0.800"/><path d="M350.800 733.800l14.400 19.400" stroke="#111" stroke-width="2.100"/><path d="M364 751.500l2.800 3.800" stroke="#111" stroke-width="1.100"/><path d="M351.500 734.200l5.500 7.500" stroke="#e8e8e8" stroke-width="0.600"/></svg>
</body></html>
